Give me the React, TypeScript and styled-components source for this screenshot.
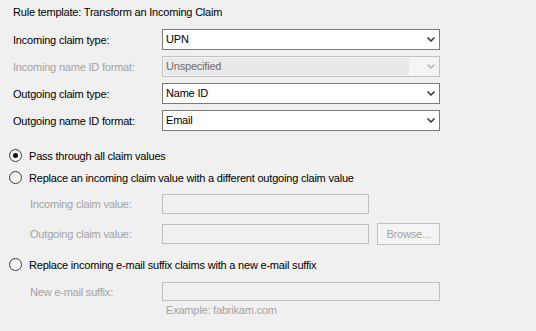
import React from 'react'
import styled, { createGlobalStyle } from 'styled-components'

const GlobalStyle = createGlobalStyle`
  html, body {
    margin: 0;
    padding: 0;
    background: #f0f0f0;
  }
  body {
    font-family: 'Liberation Sans', Arial, sans-serif;
    font-size: 11px;
    letter-spacing: -0.2px;
    color: #000;
  }
`

const Page = styled.div`
  width: 536px;
  height: 331px;
  box-sizing: border-box;
  padding: 5px 0 0 13px;
  overflow: hidden;
`

const Title = styled.div`
  height: 15px;
  line-height: 15px;
`

const FieldGrid = styled.div`
  display: grid;
  grid-template-columns: 149px 278px;
  grid-auto-rows: 21px;
  row-gap: 6px;
  margin-top: 9px;
  align-items: center;
`

const Label = styled.div<{ $disabled?: boolean }>`
  color: ${p => (p.$disabled ? '#a3a3a3' : '#000')};
  white-space: nowrap;
`

const Combo = styled.div<{ $disabled?: boolean }>`
  height: 21px;
  box-sizing: border-box;
  border: 1px solid ${p => (p.$disabled ? '#c2c2c2' : '#7a7a7a')};
  background: ${p => (p.$disabled ? '#f4f4f4' : '#fff')};
  display: flex;
  align-items: center;
  padding: 1px 4px 1px 1px;
`

const ComboText = styled.div<{ $disabled?: boolean }>`
  flex: 1;
  height: 17px;
  line-height: 17px;
  padding-left: 2px;
  color: ${p => (p.$disabled ? '#6d6d6d' : '#000')};
  background: ${p => (p.$disabled ? '#e9e9e9' : 'transparent')};
  margin-right: ${p => (p.$disabled ? '14px' : '0')};
`

const Chevron = styled.svg`
  width: 8px;
  height: 5px;
  margin-left: 4px;
  flex-shrink: 0;
`

const Options = styled.div`
  margin-top: 17px;
  display: flex;
  flex-direction: column;
`

const RadioRow = styled.label<{ $top: number }>`
  display: flex;
  align-items: center;
  height: 15px;
  margin-top: ${p => p.$top}px;
  margin-left: -4px;
`

const RadioCircle = styled.span<{ $checked?: boolean }>`
  width: 13px;
  height: 13px;
  box-sizing: border-box;
  border-radius: 50%;
  border: 1px solid #3c3c3c;
  background: linear-gradient(135deg, #e6e6e6, #fff);
  display: flex;
  align-items: center;
  justify-content: center;
  margin-right: 7px;
  &::after {
    content: '';
    width: 5px;
    height: 5px;
    border-radius: 50%;
    background: ${p => (p.$checked ? '#111' : 'transparent')};
  }
`

const SubRow = styled.div<{ $top: number }>`
  display: flex;
  align-items: center;
  margin-top: ${p => p.$top}px;
  padding-left: 17px;
`

const SubLabel = styled.div`
  width: 132px;
  color: #a3a3a3;
  white-space: nowrap;
`

const TextBox = styled.div<{ $width: number; $height?: number }>`
  width: ${p => p.$width}px;
  height: ${p => p.$height ?? 20}px;
  box-sizing: border-box;
  border: 1px solid #bfbfbf;
  background: #f0f0f0;
`

const Button = styled.div`
  width: 63px;
  height: 22px;
  box-sizing: border-box;
  margin-left: 8px;
  border: 1px solid #c2c2c2;
  color: #a3a3a3;
  display: flex;
  align-items: center;
  justify-content: center;
  background: #f4f4f4;
`

const Hint = styled.div`
  color: #a3a3a3;
  margin: 3px 0 0 153px;
`

const ChevronIcon: React.FC<{ disabled?: boolean }> = ({ disabled }) => (
  <Chevron viewBox="0 0 8 5">
    <path d="M0.5 0.5 L4 4 L7.5 0.5" fill="none" stroke={disabled ? '#b8b8b8' : '#333'} strokeWidth="1.5" />
  </Chevron>
)

const rows = [
  { label: 'Incoming claim type:', value: 'UPN' },
  { label: 'Incoming name ID format:', value: 'Unspecified', disabled: true },
  { label: 'Outgoing claim type:', value: 'Name ID' },
  { label: 'Outgoing name ID format:', value: 'Email' },
]

export default function App() {
  return (
    <Page>
      <GlobalStyle />
      <Title>Rule template: Transform an Incoming Claim</Title>
      <FieldGrid>
        {rows.map(r => (
          <React.Fragment key={r.label}>
            <Label $disabled={r.disabled}>{r.label}</Label>
            <Combo $disabled={r.disabled}>
              <ComboText $disabled={r.disabled}>{r.value}</ComboText>
              <ChevronIcon disabled={r.disabled} />
            </Combo>
          </React.Fragment>
        ))}
      </FieldGrid>
      <Options>
        <RadioRow $top={0}>
          <RadioCircle $checked />
          Pass through all claim values
        </RadioRow>
        <RadioRow $top={7}>
          <RadioCircle />
          Replace an incoming claim value with a different outgoing claim value
        </RadioRow>
        <SubRow $top={9}>
          <SubLabel>Incoming claim value:</SubLabel>
          <TextBox $width={207} />
        </SubRow>
        <SubRow $top={9}>
          <SubLabel>Outgoing claim value:</SubLabel>
          <TextBox $width={207} />
          <Button>Browse...</Button>
        </SubRow>
        <RadioRow $top={12}>
          <RadioCircle />
          Replace incoming e-mail suffix claims with a new e-mail suffix
        </RadioRow>
        <SubRow $top={10}>
          <SubLabel>New e-mail suffix:</SubLabel>
          <TextBox $width={278} $height={19} />
        </SubRow>
        <Hint>Example: fabrikam.com</Hint>
      </Options>
    </Page>
  )
}
